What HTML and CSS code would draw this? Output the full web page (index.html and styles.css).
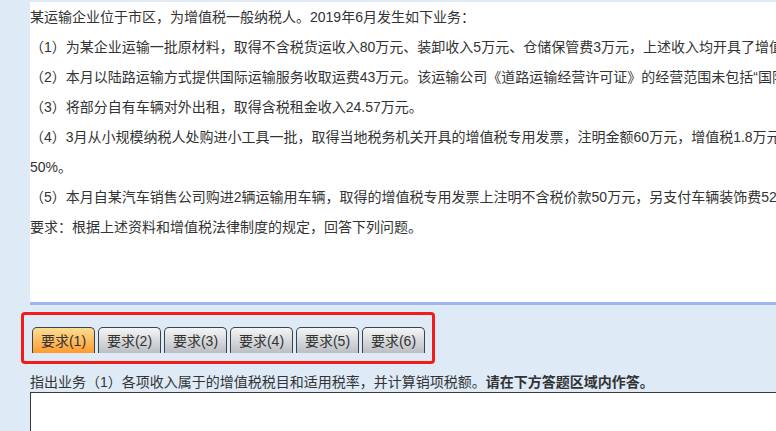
FILE: index.html
```html
<!DOCTYPE html>
<html lang="zh-CN">
<head>
<meta charset="utf-8">
<title>增值税案例</title>
<link rel="stylesheet" href="styles.css">
</head>
<body>
<div class="page">
  <div class="material">
    <p class="line">某运输企业位于市区，为增值税一般纳税人。2019年6月发生如下业务：</p>
    <p class="line">（1）为某企业运输一批原材料，取得不含税货运收入80万元、装卸收入5万元、仓储保管费3万元，上述收入均开具了增值税专用发票。</p>
    <p class="line">（2）本月以陆路运输方式提供国际运输服务收取运费43万元。该运输公司《道路运输经营许可证》的经营范围未包括“国际运输”。</p>
    <p class="line">（3）将部分自有车辆对外出租，取得含税租金收入24.57万元。</p>
    <p class="line">（4）3月从小规模纳税人处购进小工具一批，取得当地税务机关开具的增值税专用发票，注明金额60万元，增值税1.8万元，</p>
    <p class="line">50%。</p>
    <p class="line">（5）本月自某汽车销售公司购进2辆运输用车辆，取得的增值税专用发票上注明不含税价款50万元，另支付车辆装饰费52</p>
    <p class="line">要求：根据上述资料和增值税法律制度的规定，回答下列问题。</p>
  </div>
  <div class="highlight">
    <div class="tabs">
      <span class="tab active">要求(1)</span>
      <span class="tab">要求(2)</span>
      <span class="tab">要求(3)</span>
      <span class="tab">要求(4)</span>
      <span class="tab">要求(5)</span>
      <span class="tab">要求(6)</span>
    </div>
  </div>
  <p class="question">指出业务（1）各项收入属于的增值税税目和适用税率，并计算销项税额。<strong>请在下方答题区域内作答。</strong></p>
  <div class="answer"></div>
</div>
</body>
</html>
```
FILE: styles.css
```css
html, body {
  margin: 0;
  padding: 0;
  width: 776px;
  height: 431px;
  overflow: hidden;
  background: #deeaf6;
}

.page {
  font-family: "Liberation Sans", "Noto Sans CJK SC", sans-serif;
  font-size: 14px;
  color: #333;
  padding-top: 2px;
}

.material {
  margin-left: 30px;
  width: 1000px;
  height: 300px;
  background: #fff;
  border-bottom: 3px solid #9fb4f2;
  overflow: hidden;
}

.line {
  margin: 0;
  line-height: 30px;
  white-space: nowrap;
}

.highlight {
  display: inline-block;
  margin: 7px 0 0 21px;
  padding: 12px 7px 8px 8px;
  border: 3px solid #f21d1b;
  border-radius: 4px;
}

.tabs {
  display: flex;
  gap: 3px;
}

.tab {
  box-sizing: border-box;
  width: 63px;
  height: 26px;
  line-height: 26px;
  text-align: center;
  border: 1px solid #38434f;
  border-bottom: none;
  border-radius: 5px 5px 0 0;
  background: linear-gradient(#f5f5f5, #babec3);
  color: #333;
  font-size: 14px;
}

.tab.active {
  background: linear-gradient(#fcdd95, #ff9b2c);
}

.question {
  margin: 8px 0 0 30px;
  line-height: 20px;
  white-space: nowrap;
}

.question strong {
  font-weight: bold;
}

.answer {
  margin-left: 30px;
  width: 1000px;
  height: 100px;
  background: #fff;
  border-top: 1px solid #3a3a3a;
  border-left: 1px solid #3a3a3a;
}
```
